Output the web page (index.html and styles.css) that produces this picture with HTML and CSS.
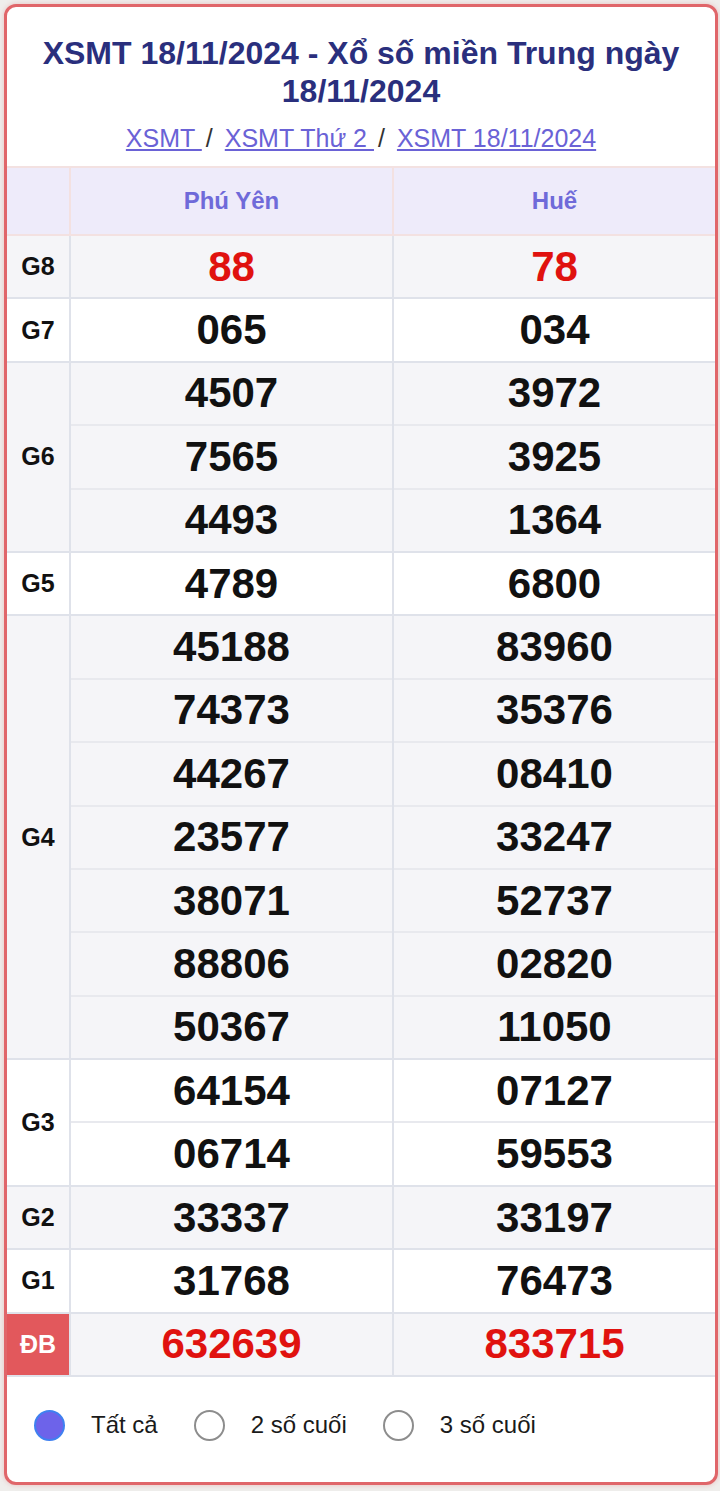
FILE: index.html
```html
<!DOCTYPE html>
<html lang="vi">
<head>
<meta charset="utf-8">
<title>XSMT 18/11/2024</title>
<link rel="stylesheet" href="styles.css">
</head>
<body>
<div class="card">
  <h1 class="title">XSMT 18/11/2024 - Xổ số miền Trung ngày 18/11/2024</h1>
  <div class="crumbs">
    <a href="#">XSMT </a><span class="sep">/</span><a href="#">XSMT Thứ 2 </a><span class="sep">/</span><a href="#">XSMT 18/11/2024</a>
  </div>
  <div class="results">
    <div class="head">
      <div class="hcell"></div>
      <div class="hcell prov">Phú Yên</div>
      <div class="hcell prov">Huế</div>
    </div>
    <div class="grp alt">
      <div class="lbl">G8</div>
      <div class="col"><div class="num red">88</div></div>
      <div class="col"><div class="num red">78</div></div>
    </div>
    <div class="grp">
      <div class="lbl">G7</div>
      <div class="col"><div class="num">065</div></div>
      <div class="col"><div class="num">034</div></div>
    </div>
    <div class="grp alt">
      <div class="lbl">G6</div>
      <div class="col"><div class="num">4507</div><div class="num">7565</div><div class="num">4493</div></div>
      <div class="col"><div class="num">3972</div><div class="num">3925</div><div class="num">1364</div></div>
    </div>
    <div class="grp">
      <div class="lbl">G5</div>
      <div class="col"><div class="num">4789</div></div>
      <div class="col"><div class="num">6800</div></div>
    </div>
    <div class="grp alt">
      <div class="lbl">G4</div>
      <div class="col"><div class="num">45188</div><div class="num">74373</div><div class="num">44267</div><div class="num">23577</div><div class="num">38071</div><div class="num">88806</div><div class="num">50367</div></div>
      <div class="col"><div class="num">83960</div><div class="num">35376</div><div class="num">08410</div><div class="num">33247</div><div class="num">52737</div><div class="num">02820</div><div class="num">11050</div></div>
    </div>
    <div class="grp">
      <div class="lbl">G3</div>
      <div class="col"><div class="num">64154</div><div class="num">06714</div></div>
      <div class="col"><div class="num">07127</div><div class="num">59553</div></div>
    </div>
    <div class="grp alt">
      <div class="lbl">G2</div>
      <div class="col"><div class="num">33337</div></div>
      <div class="col"><div class="num">33197</div></div>
    </div>
    <div class="grp">
      <div class="lbl">G1</div>
      <div class="col"><div class="num">31768</div></div>
      <div class="col"><div class="num">76473</div></div>
    </div>
    <div class="grp alt">
      <div class="lbl db">ĐB</div>
      <div class="col"><div class="num red">632639</div></div>
      <div class="col"><div class="num red">833715</div></div>
    </div>
  </div>
  <div class="filters">
    <label class="opt"><span class="radio on"></span><span class="otext">Tất cả</span></label>
    <label class="opt"><span class="radio"></span><span class="otext">2 số cuối</span></label>
    <label class="opt"><span class="radio"></span><span class="otext">3 số cuối</span></label>
  </div>
</div>
</body>
</html>
```

FILE: styles.css
```css
* { box-sizing: border-box; }
html, body { margin: 0; padding: 0; }
body {
  background: #efeeec;
  font-family: "Liberation Sans", Arial, sans-serif;
  width: 720px;
  height: 1491px;
  padding: 4px 2px 0 4px;
}
.card {
  background: #fff;
  border: 3px solid #e0666a;
  border-radius: 12px;
  box-shadow: 0 0 5px rgba(224, 102, 106, 0.35);
  overflow: hidden;
  height: 1481px;
}
.title {
  margin: 0;
  padding: 27px 16px 0;
  text-align: center;
  font-size: 32px;
  line-height: 38px;
  font-weight: bold;
  color: #2a2f7d;
}
.crumbs {
  margin-top: 14px;
  text-align: center;
  font-size: 25px;
  line-height: 28px;
  color: #222;
}
.crumbs a {
  color: #6a62d6;
  text-decoration: underline;
  white-space: pre;
}
.crumbs .sep { margin: 0 12px 0 4px; color: #333; }
.results { margin-top: 14px; }
.head {
  display: grid;
  grid-template-columns: 62px 1fr 1fr;
  height: 70px;
  background: #eeebfa;
  border-top: 2px solid #f3e1e1;
  border-bottom: 2px solid #f3e1e1;
}
.hcell {
  display: flex;
  align-items: center;
  justify-content: center;
}
.hcell + .hcell { border-left: 2px solid #f3e1e1; }
.prov {
  color: #6f6ad9;
  font-weight: bold;
  font-size: 24px;
}
.grp {
  display: grid;
  grid-template-columns: 62px 1fr 1fr;
  border-bottom: 2px solid #dfe2ea;
  background: #fff;
}
.grp.alt { background: #f5f5f8; }
.lbl {
  display: flex;
  align-items: center;
  justify-content: center;
  font-weight: bold;
  font-size: 25px;
  color: #111;
}
.lbl.db { background: #e2585c; color: #fff; font-size: 25px; }
.col { border-left: 2px solid #dfe2ea; }
.num {
  height: 61.4px;
  display: flex;
  align-items: center;
  justify-content: center;
  font-weight: bold;
  font-size: 42px;
  color: #111;
}
.num + .num { border-top: 2px solid #e8e9ee; height: 63.4px; }
.num.red { color: #e0120f; }
.filters {
  display: flex;
  align-items: center;
  height: 96px;
  padding-left: 27px;
}
.opt {
  display: flex;
  align-items: center;
  margin-right: 36px;
  font-size: 24px;
  color: #1a1a1a;
}
.radio {
  width: 31px;
  height: 31px;
  border-radius: 50%;
  border: 2px solid #8d8d8d;
  background: #fff;
  margin-right: 26px;
}
.radio.on {
  background: #6d63ea;
  border-color: #3f80f0;
}
```
